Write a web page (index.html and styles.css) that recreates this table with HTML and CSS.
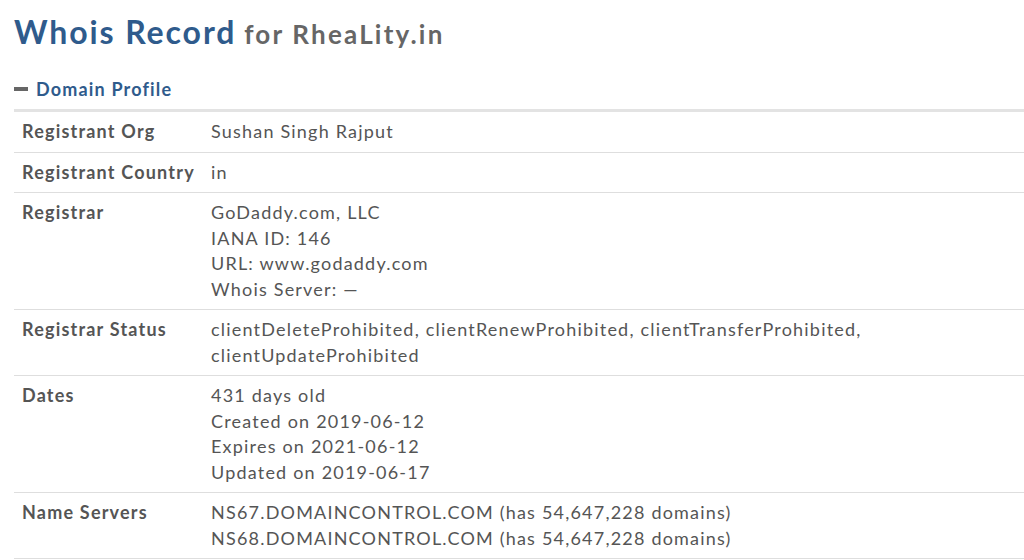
FILE: index.html
```html
<!DOCTYPE html>
<html>
<head>
<meta charset="utf-8">
<link rel="stylesheet" href="styles.css">
</head>
<body>
<div class="page">
  <h1 class="title"><span class="title-main">Whois Record</span> <span class="title-sub">for RheaLity.in</span></h1>
  <div class="section-head"><span class="minus"></span><span class="section-name">Domain Profile</span></div>
  <div class="profile">
    <div class="row"><div class="label">Registrant Org</div><div class="value">Sushan Singh Rajput</div></div>
    <div class="row"><div class="label">Registrant Country</div><div class="value">in</div></div>
    <div class="row"><div class="label">Registrar</div><div class="value">GoDaddy.com, LLC<br>IANA ID: 146<br>URL: www.godaddy.com<br>Whois Server: —</div></div>
    <div class="row"><div class="label">Registrar Status</div><div class="value">clientDeleteProhibited, clientRenewProhibited, clientTransferProhibited,<br>clientUpdateProhibited</div></div>
    <div class="row"><div class="label">Dates</div><div class="value">431 days old<br>Created on 2019-06-12<br>Expires on 2021-06-12<br>Updated on 2019-06-17</div></div>
    <div class="row"><div class="label">Name Servers</div><div class="value">NS67.DOMAINCONTROL.COM (has 54,647,228 domains)<br>NS68.DOMAINCONTROL.COM (has 54,647,228 domains)</div></div>
  </div>
</div>
</body>
</html>
```
FILE: styles.css
```css
html, body {
  margin: 0;
  padding: 0;
  background: #fff;
}
body {
  font-family: Lato, "Liberation Sans", sans-serif;
  color: #555;
}
.page {
  padding: 12px 0 0 14px;
}
.title {
  margin: 0;
  font-weight: 700;
  line-height: 40px;
}
.title-main {
  font-size: 32px;
  letter-spacing: 1.9px;
  color: #2f5b8c;
}
.title-sub {
  font-size: 26px;
  letter-spacing: 2.2px;
  color: #666;
}
.section-head {
  display: flex;
  align-items: center;
  margin-top: 23px;
  height: 24px;
  padding-bottom: 8px;
  border-bottom: 3px solid #e3e3e3;
}
.minus {
  width: 14px;
  height: 4px;
  background: #666;
  margin-right: 8px;
}
.section-name {
  font-size: 18px;
  font-weight: 700;
  letter-spacing: 1.17px;
  color: #2f5b8c;
}
.profile {
  display: flex;
  flex-direction: column;
}
.row {
  display: grid;
  grid-template-columns: 189px 1fr;
  border-bottom: 1px solid #dedede;
  font-size: 18px;
  letter-spacing: 1.2px;
  line-height: 25.5px;
  padding: 7px 0;
}
.label {
  padding-left: 8px;
  font-weight: 700;
  color: #555;
}
.value {
  padding-left: 8px;
  color: #555;
}
```
